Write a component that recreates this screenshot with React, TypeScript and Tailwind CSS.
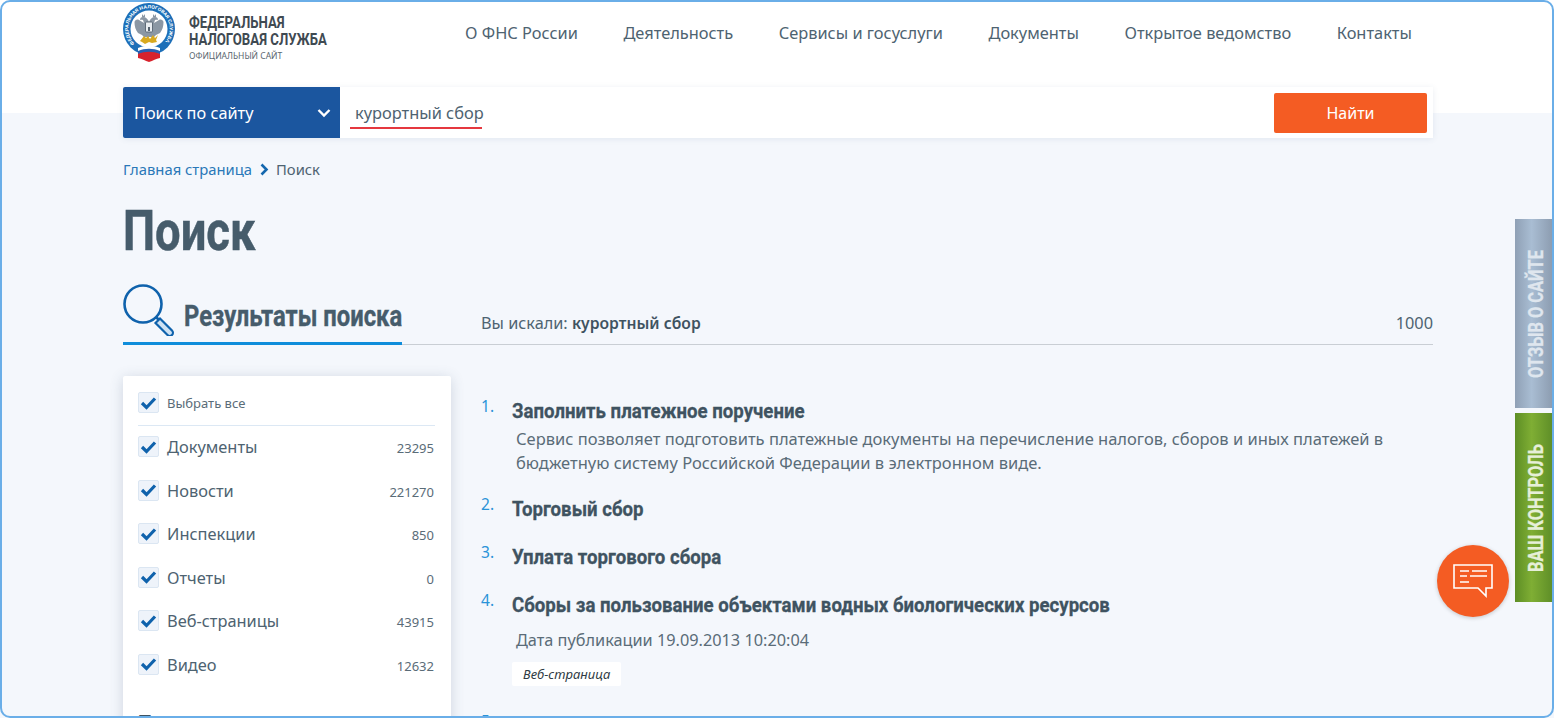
const body = { fontFamily: '"Noto Sans","Open Sans",sans-serif' };
const cond = { fontFamily: '"Roboto",sans-serif' };

function Logo() {
  return (
    <svg width="54" height="60" viewBox="0 0 54 60" className="shrink-0">
      <defs>
        <path id="ring" d="M11.5 40.5 A20.6 20.6 0 1 1 40.5 40.5" />
      </defs>
      <circle cx="26" cy="26" r="26" fill="#1d6fb8" />
      <circle cx="26" cy="26" r="18.5" fill="#fff" />
      <text fontSize="4.7" fill="#fff" fontWeight="700" style={cond} textLength="94" lengthAdjust="spacingAndGlyphs">
        <textPath href="#ring">ФЕДЕРАЛЬНАЯ НАЛОГОВАЯ СЛУЖБА</textPath>
      </text>
      {/* двуглавый орёл */}
      <path d="M26 19c-1-3-3-5-6-5-2 0-3 1-3 3 1-.5 2-.5 3 0l1 3-5-3c-2-1-4 0-4.500 2 0 4 1 8 3.500 11l4 2 3 3v-1h8v1l3-3 4-2c2.500-3 3.500-7 3.500-11-.5-2-2.500-3-4.500-2l-5 3 1-3c1-.5 2-.5 3 0 0-2-1-3-3-3-3 0-5 2-6 5z" fill="#8b97a4" />
      <path d="M19 11l1.500 2 1.500-2v3h-3zM30 11l1.500 2 1.500-2v3h-3z" fill="#8b97a4" />
      <rect x="22.500" y="19" width="7" height="10" rx="1" fill="#e9edf1" stroke="#55626f" strokeWidth="0.9" />
      <path d="M25 24h2v4h-2z" fill="#55626f" />
      <path d="M17 38l4-5 2 2 2-2 2 3 3-4 2 3 3-3-2 5 1 2-5 1-3-1-4 2-3-2z" fill="#d9a91f" />
      <path d="M15 45c7-3 15-3 22 0v4c-7-3-15-3-22 0z" fill="#fff" />
      <path d="M15 48c7-3 15-3 22 0v3.500c-7-3-15-3-22 0z" fill="#2a5fb0" />
      <path d="M15 51c7-3 15-3 22 0v4c-4 1-7 2.500-11 4-4-1.500-7-3-11-4z" fill="#d8222c" />
    </svg>
  );
}

function Check() {
  return (
    <span className="flex h-[21px] w-[21px] shrink-0 items-center justify-center rounded-[2px] border border-[#dbe6f2] bg-[#eef3fa]">
      <svg width="17" height="14" viewBox="0 0 17 14">
        <path d="M2 7l4.500 4.500L15 2.500" fill="none" stroke="#0f62ac" strokeWidth="3.200" />
      </svg>
    </span>
  );
}

const filters: [string, string][] = [
  ["Документы", "23295"],
  ["Новости", "221270"],
  ["Инспекции", "850"],
  ["Отчеты", "0"],
  ["Веб-страницы", "43915"],
  ["Видео", "12632"],
];
const nav = ["О ФНС России", "Деятельность", "Сервисы и госуслуги", "Документы", "Открытое ведомство", "Контакты"];

function Result({ n, title, className = "", children }: { n: number; title: string; className?: string; children?: React.ReactNode }) {
  return (
    <div className={"flex " + className}>
      <span className="-mt-[3px] w-[31px] shrink-0 text-[15.500px] leading-[20px] text-[#2a93d8]">{n}.</span>
      <div className="min-w-0 flex-1">
        <h3 className="origin-left scale-x-[0.887] whitespace-nowrap text-[21px] font-bold leading-[24px] text-[#3f5361] [-webkit-text-stroke:0.3px_#3f5361]" style={cond}>{title}</h3>
        {children}
      </div>
    </div>
  );
}

export default function App() {
  return (
    <div className="relative h-[718px] w-[1554px] overflow-hidden bg-[#f4f7fc]" style={body}>
      <div className="absolute inset-x-0 top-0 h-[113px] bg-white" />
      <div className="relative ml-[123px] w-[1310px]">
        <header className="flex h-[87px] items-start">
          <div className="flex w-[342px] items-start pt-[3px]">
            <Logo />
            <div className="ml-[12px] pt-[11px] text-[#3f4a52]">
              <div className="origin-left scale-x-[0.8] whitespace-nowrap text-[16.500px] font-bold leading-[17px]" style={cond}>ФЕДЕРАЛЬНАЯ</div>
              <div className="origin-left scale-x-[0.8] whitespace-nowrap text-[16.500px] font-bold leading-[17px]" style={cond}>НАЛОГОВАЯ СЛУЖБА</div>
              <div className="mt-[2px] text-[8.500px] leading-[11px] text-[#5a666f]">ОФИЦИАЛЬНЫЙ САЙТ</div>
            </div>
          </div>
          <nav className="flex w-[947px] justify-between pt-[22px] text-[16.400px] leading-[22px] text-[#4e6371]">
            {nav.map((t) => <span key={t}>{t}</span>)}
          </nav>
        </header>

        <div className="flex h-[51px] w-[1310px] items-center bg-white pr-[6px] shadow-[0_1px_6px_rgba(60,90,130,0.1)]">
          <div className="flex h-full w-[217px] shrink-0 items-center justify-between rounded-l-[2px] bg-[#1b569f] pl-[11px] pr-[9px] pt-[1px] text-[16.300px] text-white">
            <span>Поиск по сайту</span>
            <svg width="14" height="10" viewBox="0 0 14 10"><path d="M1.500 2l5.500 5.500L12.500 2" fill="none" stroke="#fff" strokeWidth="2.400" /></svg>
          </div>
          <div className="flex-1 pl-[10px]">
            <span className="block w-[132px] whitespace-nowrap border-b-2 border-[#e5383f] pb-[2px] pl-[5px] pt-[4px] text-[16.400px] leading-[24px] text-[#4e6371]">курортный сбор</span>
          </div>
          <div className="flex h-[40px] w-[153px] items-center justify-center rounded-[2px] bg-[#f45c23] text-[16px] text-white">Найти</div>
        </div>

        <div className="mt-[21px] flex items-center text-[14.800px] leading-[20px]">
          <span className="text-[#2a78b8]">Главная страница</span>
          <svg className="ml-[8px] mr-[7px]" width="9" height="13" viewBox="0 0 9 13"><path d="M1.500 1.500l5 5-5 5" fill="none" stroke="#1467ae" strokeWidth="2.600" /></svg>
          <span className="text-[#4e6371]">Поиск</span>
        </div>

        <h1 className="mt-[20px] origin-left scale-x-[0.81] whitespace-nowrap text-[56px] font-bold leading-[64px] text-[#465c6b] [-webkit-text-stroke:0.5px_#465c6b]" style={cond}>Поиск</h1>

        <div className="mt-[21px] flex h-[61px] border-b-[1px] border-[#c9ced4]">
          <div className="flex h-[61px] w-[279px] shrink-0 items-start border-b-[3px] border-[#0f8ddb]">
            <svg width="53" height="52" viewBox="0 0 53 52" className="shrink-0">
              <circle cx="20" cy="20" r="18.500" fill="none" stroke="#0f62ac" strokeWidth="2.600" />
              <path d="M33 33l4 4" stroke="#0f62ac" strokeWidth="2.600" />
              <path d="M37 34.500l12 12a3 3 0 0 1-4.500 4.500l-12-12z" fill="#cfe2f3" stroke="#0f62ac" strokeWidth="2.200" />
            </svg>
            <span className="ml-[8px] origin-left scale-x-[0.82] whitespace-nowrap pt-[14px] text-[29px] font-bold leading-[36px] text-[#465c6b] [-webkit-text-stroke:0.4px_#465c6b]" style={cond}>Результаты поиска</span>
          </div>
          <div className="flex flex-1 items-start justify-between pl-[79px] pt-[28px] text-[16.300px] leading-[22px] text-[#4e6371]">
            <span>Вы искали: <span className="text-[15.700px] font-semibold text-[#3f5361]">курортный сбор</span></span>
            <span>1000</span>
          </div>
        </div>

        <div className="mt-[31px] flex">
          <aside className="h-[400px] w-[328px] shrink-0 rounded-[2px] bg-white pl-[15px] pr-[16px] pt-[16px] shadow-[0_2px_14px_rgba(60,80,110,0.2)]">
            <div className="flex h-[34px] items-start gap-[8px] border-b border-[#dce8f4] text-[13px] leading-[23px] text-[#5a6c78]">
              <Check /><span>Выбрать все</span>
            </div>
            <div className="pt-[10px]">
              {filters.map(([t, c]) => (
                <div key={t} className="flex h-[43.500px] items-start gap-[8px]">
                  <Check />
                  <span className="flex-1 text-[16.400px] leading-[21px] text-[#4e6371]">{t}</span>
                  <span className="pr-[1px] pt-[2px] text-[13px] leading-[21px] text-[#5a6c78]">{c}</span>
                </div>
              ))}
            </div>
            <div className="origin-left scale-x-[0.85] pt-[16px] text-[23px] font-bold leading-[24px] text-[#3f5361]" style={cond}>Период</div>
          </aside>

          <main className="ml-[30px] flex-1 pt-[23px]">
            <Result n={1} title="Заполнить платежное поручение">
              <p className="mt-[4px] w-[900px] pl-[4px] text-[16.500px] leading-[24px] text-[#5a6c78]">
                Сервис позволяет подготовить платежные документы на перечисление налогов, сборов и иных платежей в бюджетную систему Российской Федерации в электронном виде.
              </p>
            </Result>
            <Result n={2} title="Торговый сбор" className="mt-[22px]" />
            <Result n={3} title="Уплата торгового сбора" className="mt-[24px]" />
            <Result n={4} title="Сборы за пользование объектами водных биологических ресурсов" className="mt-[24px]">
              <p className="mt-[12px] pl-[4px] text-[16.300px] leading-[22px] text-[#5a6c78]">Дата публикации 19.09.2013 10:20:04</p>
              <span className="mt-[11px] inline-block rounded-[2px] bg-white px-[11px] text-[13px] italic leading-[24px] text-[#2f3b44]">Веб-страница</span>
            </Result>
            <Result n={5} title="Сборы за пользование объектами животного мира" className="mt-[28px]" />
          </main>
        </div>
      </div>

      <div className="absolute left-[1515px] top-[219px] flex h-[189px] w-[37px] items-center justify-center bg-[linear-gradient(90deg,#8fa0b5,#a9bdd3_45%,#8d9db1)] pl-[4px]">
        <span className="-rotate-90 scale-x-[0.82] whitespace-nowrap text-[20px] font-bold text-[#dfe6ee] [-webkit-text-stroke:0.3px_#dfe6ee]" style={cond}>ОТЗЫВ О САЙТЕ</span>
      </div>
      <div className="absolute left-[1515px] top-[413px] flex h-[189px] w-[37px] items-center justify-center bg-[linear-gradient(90deg,#5d8e25,#7fae34_45%,#5f8f28)] pl-[4px]">
        <span className="-rotate-90 scale-x-[0.82] whitespace-nowrap text-[20px] font-bold text-[#e6efd8] [-webkit-text-stroke:0.3px_#e6efd8]" style={cond}>ВАШ КОНТРОЛЬ</span>
      </div>
      <div className="absolute left-[1437px] top-[545px] flex h-[72px] w-[72px] items-center justify-center rounded-full bg-[#f45c23] shadow-[0_1px_4px_rgba(0,0,0,0.2)]">
        <svg width="42" height="34" viewBox="0 0 42 34" fill="none" stroke="#fff">
          <path d="M2 1h38v23h-6v8l-8-8H2z" strokeWidth="1.600" />
          <path d="M8 7h9M20 7h15M8 12h7M18 12h17M8 18h9" strokeWidth="1.700" />
        </svg>
      </div>

      <div className="pointer-events-none absolute inset-0 rounded-[10px] border-2 border-[#6aaee8]" />
    </div>
  );
}
